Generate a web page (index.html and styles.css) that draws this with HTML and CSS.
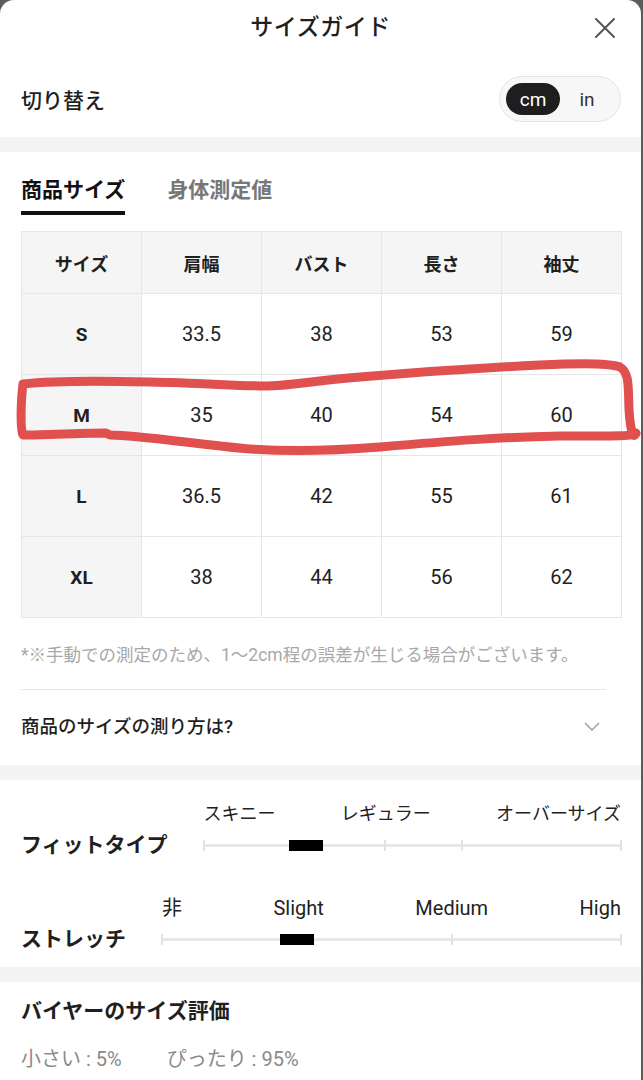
FILE: index.html
```html
<!DOCTYPE html>
<html lang="ja">
<head>
<meta charset="utf-8">
<title>サイズガイド</title>
<link rel="stylesheet" href="styles.css">
</head>
<body>
<div class="sheet">
  <header class="header">
    <h1 class="title">サイズガイド</h1>
    <button class="close" aria-label="閉じる">
      <svg width="22" height="22" viewBox="0 0 22 22"><path d="M2 2 L20 20 M20 2 L2 20" stroke="#555" stroke-width="2" fill="none" stroke-linecap="round"/></svg>
    </button>
  </header>

  <div class="unit-row">
    <span class="unit-label">切り替え</span>
    <div class="unit-toggle">
      <span class="unit active">cm</span>
      <span class="unit">in</span>
    </div>
  </div>

  <div class="band"></div>

  <section class="size-section">
    <nav class="tabs">
      <span class="tab active">商品サイズ</span>
      <span class="tab">身体測定値</span>
    </nav>

    <div class="table-wrap">
      <table class="size-table">
        <thead>
          <tr><th>サイズ</th><th>肩幅</th><th>バスト</th><th>長さ</th><th>袖丈</th></tr>
        </thead>
        <tbody>
          <tr><th>S</th><td>33.5</td><td>38</td><td>53</td><td>59</td></tr>
          <tr><th>M</th><td>35</td><td>40</td><td>54</td><td>60</td></tr>
          <tr><th>L</th><td>36.5</td><td>42</td><td>55</td><td>61</td></tr>
          <tr><th>XL</th><td>38</td><td>44</td><td>56</td><td>62</td></tr>
        </tbody>
      </table>
      <svg class="marker" width="641" height="120" viewBox="0 0 641 120">
        <path d="M23 35 C50 32 110 32 150 33 C200 34 240 37 265 37 C290 37 310 32 360 28 C420 23 480 19 540 16 C580 14 610 14 620 18 C630 24 628 40 629 60 C630 78 633 92 636 84 C637 88 600 87 560 87 C500 88 450 92 380 98 C330 102 280 102 250 100 C200 96 140 86 110 86 L106 84 C80 84 40 86 23 86 C20 80 21 50 23 35 Z" fill="none" stroke="#e0504f" stroke-width="9" stroke-linejoin="round" stroke-linecap="round"/>
      </svg>
    </div>

    <p class="note">*※手動での測定のため、1〜2cm程の誤差が生じる場合がございます。</p>

    <div class="accordion">
      <span class="accordion-title">商品のサイズの測り方は?</span>
      <svg width="16" height="10" viewBox="0 0 16 10"><path d="M1 1 L8 8 L15 1" stroke="#999" stroke-width="1.4" fill="none"/></svg>
    </div>
  </section>

  <div class="band"></div>

  <section class="fit-section">
    <div class="fit-row">
      <span class="fit-label">フィットタイプ</span>
      <div class="slider">
        <div class="scale-labels"><span>スキニー</span><span>レギュラー</span><span>オーバーサイズ</span></div>
        <div class="track">
          <span class="tick" style="left:0%"></span>
          <span class="tick" style="left:43.4%"></span>
          <span class="tick" style="left:61.9%"></span>
          <span class="tick" style="left:100%"></span>
          <span class="thumb" style="left:24.6%"></span>
        </div>
      </div>
    </div>
    <div class="fit-row stretch">
      <span class="fit-label">ストレッチ</span>
      <div class="slider">
        <div class="scale-labels latin"><span>非</span><span>Slight</span><span>Medium</span><span>High</span></div>
        <div class="track">
          <span class="tick" style="left:0%"></span>
          <span class="tick" style="left:63.1%"></span>
          <span class="tick" style="left:100%"></span>
          <span class="thumb" style="left:29.5%"></span>
        </div>
      </div>
    </div>
  </section>

  <div class="band"></div>

  <section class="buyer-section">
    <h2 class="buyer-title">バイヤーのサイズ評価</h2>
    <div class="stats">
      <span>小さい : 5%</span>
      <span>ぴったり : 95%</span>
    </div>
  </section>
</div>
</body>
</html>
```
FILE: styles.css
```css
* { box-sizing: border-box; }
html, body { margin: 0; padding: 0; }
body {
  background: #5c5c5c;
  font-family: "Roboto", "Noto Sans CJK JP", sans-serif;
  color: #1f1f1f;
  width: 643px;
  height: 1080px;
  overflow: hidden;
}
.sheet {
  width: 641px;
  min-height: 1080px;
  background: #fff;
  border-radius: 14px 14px 0 0;
}
.header {
  height: 56px;
  display: flex;
  align-items: center;
  justify-content: center;
  position: relative;
}
.title {
  margin: 0;
  font-size: 23px;
  font-weight: 500;
  letter-spacing: 0.5px;
  line-height: 30px;
}
.close {
  position: absolute;
  right: 25px;
  top: 17px;
  border: 0;
  background: none;
  padding: 0;
  width: 22px;
  height: 22px;
}
.unit-row {
  display: flex;
  align-items: center;
  justify-content: space-between;
  padding: 20px 20px 15px 21px;
}
.unit-label {
  font-size: 21px;
  font-weight: 500;
}
.unit-toggle {
  display: flex;
  padding: 6px;
  border: 1px solid #e4e4e4;
  border-radius: 24px;
  background: #f7f7f7;
}
.unit {
  width: 54px;
  height: 32px;
  border-radius: 16px;
  display: flex;
  align-items: center;
  justify-content: center;
  font-size: 19px;
  color: #333;
}
.unit.active {
  background: #1e1e1e;
  color: #fff;
}
.band {
  height: 15px;
  background: #f4f4f4;
}
.size-section {
  padding: 25px 20px 0 21px;
}
.tabs {
  display: flex;
  gap: 42px;
  margin-bottom: 16px;
}
.tab {
  font-size: 21px;
  font-weight: 700;
  line-height: 26px;
  padding-bottom: 8px;
  color: #777;
  border-bottom: 4px solid transparent;
}
.tab.active {
  color: #111;
  border-bottom-color: #111;
}
.table-wrap {
  position: relative;
}
.size-table {
  width: 601px;
  border-collapse: collapse;
  table-layout: fixed;
}
.size-table th,
.size-table td {
  border: 1px solid #e6e6e6;
  text-align: center;
  padding: 0;
}
.size-table thead th {
  height: 62px;
  background: #f5f5f5;
  font-size: 18px;
  font-weight: 700;
}
.size-table tbody th {
  background: #f5f5f5;
  font-size: 19px;
  font-weight: 700;
  height: 81px;
}
.size-table td {
  font-size: 20px;
  height: 81px;
  color: #222;
}
.marker {
  position: absolute;
  left: -21px;
  top: 118px;
  overflow: visible;
  pointer-events: none;
}
.note {
  margin: 25px 0 0;
  font-size: 17.5px;
  line-height: 24px;
  color: #a8a8a8;
}
.accordion {
  margin-top: 22px;
  margin-right: 15px;
  border-top: 1px solid #e8e8e8;
  padding: 24px 6px 25px 0;
  display: flex;
  align-items: center;
  justify-content: space-between;
}
.accordion-title {
  font-size: 18.5px;
  font-weight: 500;
  line-height: 26px;
}
.fit-section {
  padding: 23px 20px 17px 21px;
  display: flex;
  flex-direction: column;
  gap: 41px;
}
.fit-row {
  display: flex;
  align-items: flex-end;
  gap: 36px;
}
.fit-label {
  font-size: 21px;
  font-weight: 700;
  line-height: 22px;
  white-space: nowrap;
}
.slider {
  flex: 1;
  display: flex;
  flex-direction: column;
  gap: 9px;
}
.scale-labels {
  display: flex;
  justify-content: space-between;
  font-size: 18px;
  line-height: 22px;
  color: #222;
}
.scale-labels.latin {
  font-size: 20px;
}
.track {
  position: relative;
  height: 22px;
}
.track::before {
  content: "";
  position: absolute;
  left: 0;
  right: 0;
  top: 10px;
  height: 3px;
  background: #e7e7e7;
}
.tick {
  position: absolute;
  top: 6px;
  width: 2px;
  height: 11px;
  margin-left: -1px;
  background: #e2e2e2;
}
.thumb {
  position: absolute;
  top: 6px;
  width: 34px;
  height: 11px;
  margin-left: -17px;
  background: #000;
}
.buyer-section {
  padding: 15px 20px 0 21px;
}
.buyer-title {
  margin: 0;
  font-size: 21px;
  font-weight: 700;
  line-height: 28px;
}
.stats {
  margin-top: 21px;
  display: flex;
  gap: 45px;
  font-size: 20px;
  line-height: 26px;
  color: #8a8a8a;
}
```
